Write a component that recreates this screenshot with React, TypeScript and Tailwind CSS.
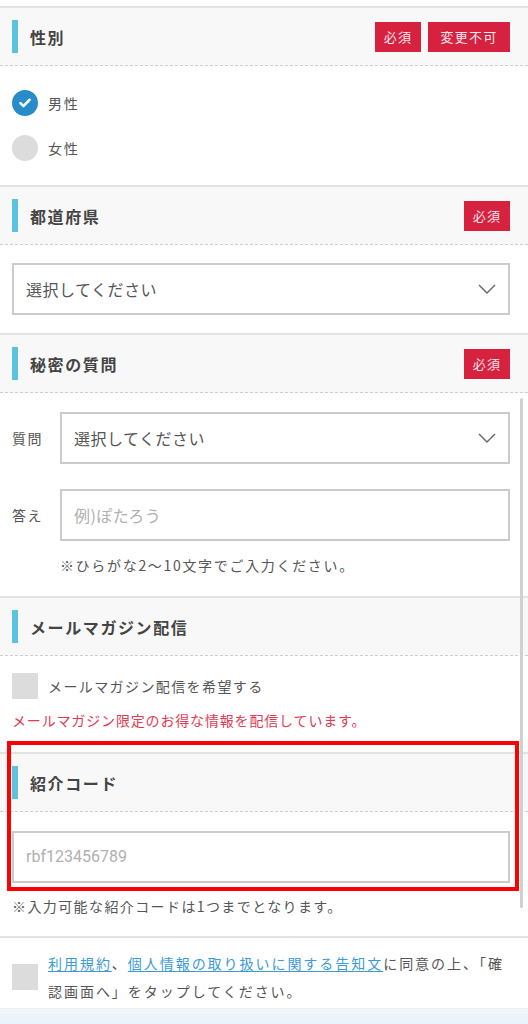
import React from 'react';

const FONT = { fontFamily: "'Noto Sans CJK JP', 'Noto Sans', sans-serif" };

const Badge: React.FC<{ label: string; wide?: boolean }> = ({ label, wide }) => (
  <span
    className={`flex h-[30px] items-center justify-center bg-[#d6213f] text-[13px] tracking-[0.1em] text-[#fde8ec] ${
      wide ? 'w-[82px]' : 'w-[46px]'
    }`}
  >
    {label}
  </span>
);

const SectionHeader: React.FC<{ title: string; badges?: string[] }> = ({ title, badges = [] }) => (
  <div className="flex h-[58px] items-center border-b border-dashed border-[#cfcfcf] bg-[#f8f8f8] pl-3 pr-[18px]">
    <div className="h-[33px] w-[6px] bg-[#5bc3e0]" />
    <h2 className="ml-3 flex-1 text-[16px] font-bold tracking-[0.1em] text-[#444]">{title}</h2>
    <div className="flex gap-[7px]">
      {badges.map((b) => (
        <Badge key={b} label={b} wide={b.length > 2} />
      ))}
    </div>
  </div>
);

const Chevron = () => (
  <svg width="18" height="10" viewBox="0 0 18 10" fill="none" stroke="#666" strokeWidth="1.4">
    <path d="M1 1l8 8 8-8" />
  </svg>
);

const SelectBox: React.FC = () => (
  <div className="flex h-[52px] flex-1 items-center justify-between border-2 border-[#cbcbcb] pl-3 pr-3">
    <span className="text-[16px] tracking-[0.03em] text-[#555]">選択してください</span>
    <Chevron />
  </div>
);

const Radio: React.FC<{ label: string; checked?: boolean }> = ({ label, checked }) => (
  <div className="flex items-center">
    {checked ? (
      <div className="flex h-[26px] w-[26px] items-center justify-center rounded-full bg-[#288ccb]">
        <svg width="12" height="10" viewBox="0 0 12 10" fill="none" stroke="#fff" strokeWidth="2.6" strokeLinecap="round" strokeLinejoin="round">
          <path d="M1.5 5.2l3 3 6-6.4" />
        </svg>
      </div>
    ) : (
      <div className="h-[26px] w-[26px] rounded-full bg-[#dcdcdc]" />
    )}
    <span className="ml-[10px] text-[14px] tracking-[0.12em] text-[#555]">{label}</span>
  </div>
);

const App: React.FC = () => (
  <div className="relative min-h-[1024px] bg-white" style={FONT}>
    <div className="h-[6px]" />

    {/* 性別 */}
    <section className="border-t-2 border-[#e2e2e2]">
      <SectionHeader title="性別" badges={['必須', '変更不可']} />
      <div className="flex flex-col gap-[19px] px-3 py-6">
        <Radio label="男性" checked />
        <Radio label="女性" />
      </div>
    </section>

    {/* 都道府県 */}
    <section className="border-t-2 border-[#e2e2e2]">
      <SectionHeader title="都道府県" badges={['必須']} />
      <div className="flex px-3 py-[18px]">
        <SelectBox />
        <div className="w-[6px]" />
      </div>
    </section>

    {/* 秘密の質問 */}
    <section className="border-t-2 border-[#e2e2e2]">
      <SectionHeader title="秘密の質問" badges={['必須']} />
      <div className="pb-[20px] pl-3 pr-[18px] pt-[19px]">
        <div className="flex items-center">
          <span className="w-[48px] text-[14px] tracking-[0.1em] text-[#555]">質問</span>
          <SelectBox />
        </div>
        <div className="mt-[25px] flex items-center">
          <span className="w-[48px] text-[14px] tracking-[0.1em] text-[#555]">答え</span>
          <div className="flex h-[52px] flex-1 items-center border-2 border-[#cbcbcb] pl-3">
            <span className="text-[16px] tracking-[0.03em] text-[#b0b0b0]">例)ぽたろう</span>
          </div>
        </div>
        <p className="ml-[48px] mt-[14px] text-[14px] leading-[21px] tracking-[0.12em] text-[#555]">
          ※ひらがな2〜10文字でご入力ください。
        </p>
      </div>
    </section>

    {/* メールマガジン配信 */}
    <section className="border-t-2 border-[#e2e2e2]">
      <SectionHeader title="メールマガジン配信" />
      <div className="px-3 pb-[21px] pt-[17px]">
        <div className="flex items-center">
          <div className="h-[26px] w-[26px] bg-[#dcdcdc]" />
          <span className="ml-[10px] text-[14px] tracking-[0.1em] text-[#555]">メールマガジン配信を希望する</span>
        </div>
        <p className="mt-[11px] text-[14px] leading-[21px] tracking-[0.06em] text-[#e23a52]">
          メールマガジン限定のお得な情報を配信しています。
        </p>
      </div>
    </section>

    {/* 紹介コード */}
    <section className="border-t-2 border-[#e2e2e2]">
      <SectionHeader title="紹介コード" />
      <div className="pb-[19px] pl-3 pr-[18px] pt-[19px]">
        <div className="flex h-[52px] items-center border-2 border-[#cbcbcb] pl-3">
          <span className="text-[16px] text-[#b0b0b0]" style={{ fontFamily: "'Roboto', 'Noto Sans', sans-serif" }}>
            rbf123456789
          </span>
        </div>
        <p className="mt-[13px] text-[14px] leading-[21px] tracking-[0.1em] text-[#555]">
          ※入力可能な紹介コードは1つまでとなります。
        </p>
      </div>
    </section>

    {/* 同意 */}
    <section className="border-t-2 border-[#e2e2e2]">
      <div className="flex items-center px-3 pb-[3px] pt-[11px]">
        <div className="h-[26px] w-[26px] shrink-0 bg-[#dcdcdc]" />
        <p className="ml-[10px] text-[14px] leading-[28px] tracking-[0.14em] text-[#555]">
          <a className="text-[#3b9ad8] underline underline-offset-2">利用規約</a>、<a className="text-[#3b9ad8] underline underline-offset-2">個人情報の取り扱いに関する告知文</a>に同意の上、「確認画面へ」をタップしてください。
        </p>
      </div>
    </section>
    <div className="h-[16px] border-t border-[#eeeeee] bg-gradient-to-b from-[#f1f6fb] to-[#eaf3fa]" />

    {/* scroll indicator */}
    <div className="absolute left-[520px] top-[398px] h-[510px] w-[3px] rounded-full bg-[#d0d0d0]" />

    {/* highlight annotation */}
    <div className="pointer-events-none absolute left-[7px] top-[741px] h-[150px] w-[512px] border-4 border-[#ff0000]" />
  </div>
);

export default App;
